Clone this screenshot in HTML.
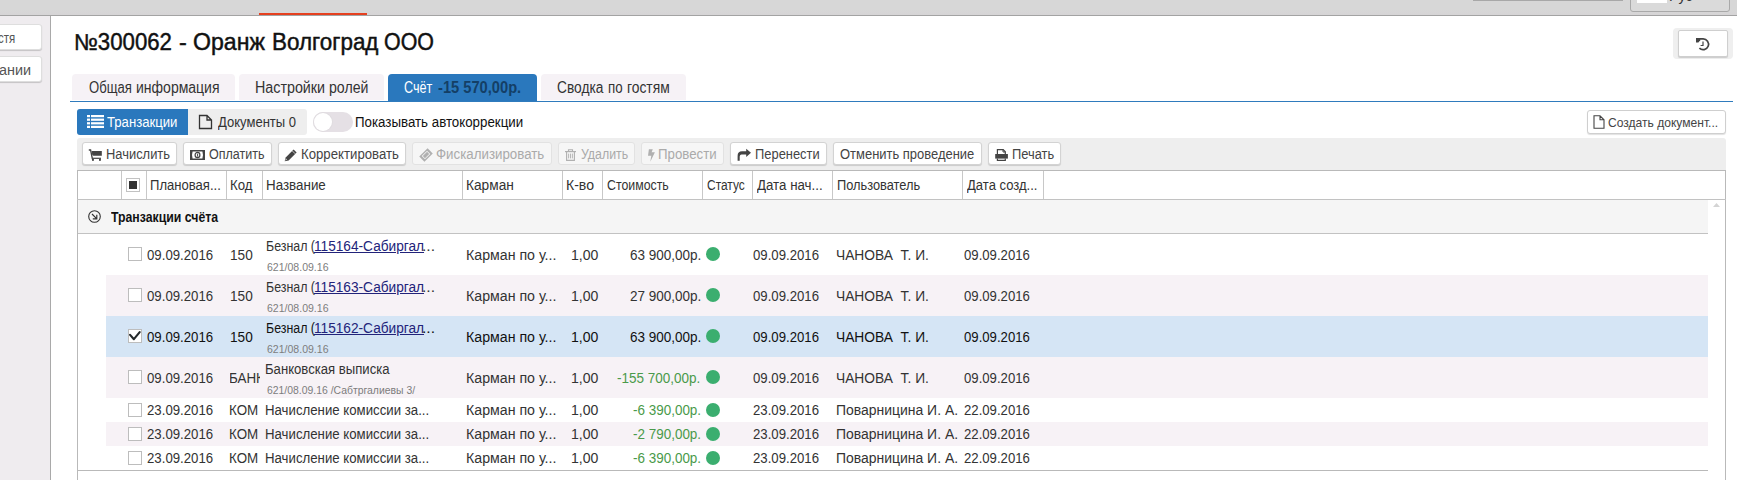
<!DOCTYPE html>
<html><head><meta charset="utf-8"><style>
html,body{margin:0;padding:0}
body{width:1737px;height:480px;overflow:hidden;position:relative;background:#fff;font-family:"Liberation Sans", sans-serif}
body div,body span,body svg{position:absolute}
.t{white-space:pre;transform-origin:0 0;display:block}
</style></head><body>
<div style="left:0px;top:0px;width:1737px;height:15px;background:linear-gradient(#d7d7d7 0,#d7d7d7 9px,#d6d4d6 15px)"></div>
<div style="left:0px;top:15px;width:1737px;height:1px;background:#a3a3a3"></div>
<div style="left:259px;top:13px;width:108px;height:2px;background:#e5401f"></div>
<div style="left:1473px;top:0px;width:150px;height:1px;background:#a8a8a8"></div>
<div style="left:1630px;top:-4px;width:100px;height:16px;background:#dadada;border:1px solid #a9a9a9;border-radius:3px;box-sizing:border-box"></div>
<div style="left:1637px;top:0px;width:30px;height:3px;background:#fff"></div>
<span class="t" style="left:1669.48px;top:-11px;font-size:14px;line-height:14px;color:#333;font-weight:normal;transform:scaleX(1.0182);">Рус</span>
<div style="left:0px;top:16px;width:50px;height:464px;background:#efecef"></div>
<div style="left:50px;top:16px;width:1px;height:464px;background:#a9a9a9"></div>
<div style="left:-10px;top:24px;width:52px;height:26px;background:#fff;border:1px solid #dedede;border-radius:3px;box-sizing:border-box;box-shadow:0 1px 1px rgba(0,0,0,.18)"></div>
<div style="left:-10px;top:56px;width:52px;height:26px;background:#fff;border:1px solid #dedede;border-radius:3px;box-sizing:border-box;box-shadow:0 1px 1px rgba(0,0,0,.18)"></div>
<span class="t" style="left:-2.50px;top:31px;font-size:14px;line-height:14px;color:#555;font-weight:normal;transform:scaleX(0.8190);">стя</span>
<span class="t" style="left:-1.50px;top:63px;font-size:14px;line-height:14px;color:#555;font-weight:normal;transform:scaleX(1.0290);">ании</span>
<span class="t" style="left:73.97px;top:31px;font-size:23px;line-height:23px;color:#111;font-weight:normal;transform:scaleX(0.9657);-webkit-text-stroke:0.45px #111;">№300062</span>
<span class="t" style="left:179.38px;top:31px;font-size:23px;line-height:23px;color:#111;font-weight:normal;transform:scaleX(1.0167);-webkit-text-stroke:0.45px #111;">-</span>
<span class="t" style="left:193.30px;top:31px;font-size:23px;line-height:23px;color:#111;font-weight:normal;transform:scaleX(1.0042);-webkit-text-stroke:0.45px #111;">Оранж</span>
<span class="t" style="left:271.55px;top:31px;font-size:23px;line-height:23px;color:#111;font-weight:normal;transform:scaleX(0.9757);-webkit-text-stroke:0.45px #111;">Волгоград</span>
<span class="t" style="left:384.47px;top:31px;font-size:23px;line-height:23px;color:#111;font-weight:normal;transform:scaleX(0.9298);-webkit-text-stroke:0.45px #111;">ООО</span>
<div style="left:1673px;top:28px;width:60px;height:31px;background:#efefef;border-radius:4px"></div>
<div style="left:1678px;top:30px;width:50px;height:27px;background:#fff;border:1px solid #cfcfcf;border-radius:2px;box-sizing:border-box;box-shadow:0 1px 1px rgba(0,0,0,.15)"></div>
<svg style="left:1695px;top:36px" width="16" height="16" viewBox="0 0 16 16"><path d="M2.5 2.9 H8 A5.4 5.4 0 1 1 4.4 12.2" fill="none" stroke="#444" stroke-width="1.7"/><path d="M1 1.9 H5.2 V4.2 L3.4 6.6 H1 Z" fill="#444"/><path d="M8 5.5 V9.5 H5.6" fill="none" stroke="#444" stroke-width="1.2"/></svg>
<div style="left:72px;top:74px;width:163px;height:26px;background:#f6f2f6;border-radius:4px 4px 0 0"></div>
<div style="left:239px;top:74px;width:145px;height:26px;background:#f6f2f6;border-radius:4px 4px 0 0"></div>
<div style="left:388px;top:74px;width:149px;height:28px;background:#2a78bd;border-radius:4px 4px 0 0"></div>
<div style="left:541px;top:74px;width:145px;height:26px;background:#f6f2f6;border-radius:4px 4px 0 0"></div>
<div style="left:70px;top:101px;width:1663px;height:1px;background:#2f7bbd"></div>
<span class="t" style="left:88.80px;top:80px;font-size:16px;line-height:16px;color:#333;font-weight:normal;transform:scaleX(0.8192);">Общая</span>
<span class="t" style="left:135.72px;top:80px;font-size:16px;line-height:16px;color:#333;font-weight:normal;transform:scaleX(0.8755);">информация</span>
<span class="t" style="left:254.71px;top:80px;font-size:16px;line-height:16px;color:#333;font-weight:normal;transform:scaleX(0.8935);">Настройки</span>
<span class="t" style="left:328.72px;top:80px;font-size:16px;line-height:16px;color:#333;font-weight:normal;transform:scaleX(0.8837);">ролей</span>
<span class="t" style="left:404.01px;top:80px;font-size:16px;line-height:16px;color:#fff;font-weight:normal;transform:scaleX(0.7886);">Счёт</span>
<span class="t" style="left:437.50px;top:80px;font-size:16px;line-height:16px;color:#143f66;font-weight:bold;transform:scaleX(0.9167);">-15 570,00р.</span>
<span class="t" style="left:556.54px;top:80px;font-size:16px;line-height:16px;color:#333;font-weight:normal;transform:scaleX(0.8585);">Сводка</span>
<span class="t" style="left:608.37px;top:80px;font-size:16px;line-height:16px;color:#333;font-weight:normal;transform:scaleX(0.8312);">по</span>
<span class="t" style="left:627.34px;top:80px;font-size:16px;line-height:16px;color:#333;font-weight:normal;transform:scaleX(0.8646);">гостям</span>
<div style="left:77px;top:109px;width:230px;height:26px;background:#eeeeee;border-radius:3px"></div>
<div style="left:77px;top:109px;width:111px;height:26px;background:#2a78bd;border-radius:3px 0 0 3px"></div>
<svg style="left:87px;top:115px" width="17" height="13" viewBox="0 0 17 13"><g fill="#fff"><rect x="0" y="0" width="3" height="2.2"/><rect x="4" y="0" width="13" height="2.2"/><rect x="0" y="3.6" width="3" height="2.2"/><rect x="4" y="3.6" width="13" height="2.2"/><rect x="0" y="7.2" width="3" height="2.2"/><rect x="4" y="7.2" width="13" height="2.2"/><rect x="0" y="10.8" width="3" height="2.2"/><rect x="4" y="10.8" width="13" height="2.2"/></g></svg>
<span class="t" style="left:107.40px;top:115px;font-size:14px;line-height:14px;color:#fff;font-weight:normal;transform:scaleX(0.9387);">Транзакции</span>
<svg style="left:198px;top:114px" width="15" height="16" viewBox="0 0 15 16"><path d="M1.5 1.5 H9 L13.5 6 V14.5 H1.5 Z M9 1.5 V6 H13.5" fill="none" stroke="#333" stroke-width="1.3"/></svg>
<span class="t" style="left:217.50px;top:115px;font-size:14px;line-height:14px;color:#333;font-weight:normal;transform:scaleX(0.9310);">Документы 0</span>
<div style="left:313px;top:112px;width:40px;height:20px;background:#e5e0e5;border-radius:10px"></div>
<div style="left:314px;top:113px;width:18px;height:18px;background:#fff;border-radius:50%;box-shadow:0 0 0 1px #e0dce0"></div>
<span class="t" style="left:354.75px;top:115px;font-size:14px;line-height:14px;color:#111;font-weight:normal;transform:scaleX(0.9503);">Показывать автокоррекции</span>
<div style="left:1587px;top:110px;width:139px;height:24px;background:#fff;border:1px solid #cfcfcf;border-radius:3px;box-sizing:border-box;box-shadow:0 1px 1px rgba(0,0,0,.12)"></div>
<svg style="left:1593px;top:115px" width="12" height="14" viewBox="0 0 12 14"><path d="M1 0.8 H7 L11 4.8 V13.2 H1 Z M7 0.8 V4.8 H11" fill="none" stroke="#444" stroke-width="1.1"/></svg>
<span class="t" style="left:1608.00px;top:116px;font-size:13px;line-height:13px;color:#444;font-weight:normal;transform:scaleX(0.9280);">Создать документ...</span>
<div style="left:77px;top:138px;width:1649px;height:33px;background:#eeeeee;border-radius:3px 3px 0 0"></div>
<div style="left:82px;top:142px;width:95px;height:23px;background:#fff;border:1px solid #d3d3d3;border-radius:3px;box-sizing:border-box;box-shadow:0 1px 1px rgba(0,0,0,.15)"></div>
<span class="t" style="left:105.78px;top:147px;font-size:14px;line-height:14px;color:#444;font-weight:normal;transform:scaleX(0.9221);">Начислить</span>
<div style="left:183px;top:142px;width:89px;height:23px;background:#fff;border:1px solid #d3d3d3;border-radius:3px;box-sizing:border-box;box-shadow:0 1px 1px rgba(0,0,0,.15)"></div>
<span class="t" style="left:209.30px;top:147px;font-size:14px;line-height:14px;color:#444;font-weight:normal;transform:scaleX(0.8952);">Оплатить</span>
<div style="left:278px;top:142px;width:128px;height:23px;background:#fff;border:1px solid #d3d3d3;border-radius:3px;box-sizing:border-box;box-shadow:0 1px 1px rgba(0,0,0,.15)"></div>
<span class="t" style="left:300.66px;top:147px;font-size:14px;line-height:14px;color:#444;font-weight:normal;transform:scaleX(0.9427);">Корректировать</span>
<div style="left:412px;top:142px;width:140px;height:23px;background:#f6f6f6;border:1px solid #e2e2e2;border-radius:3px;box-sizing:border-box"></div>
<span class="t" style="left:436.25px;top:147px;font-size:14px;line-height:14px;color:#aaaaaa;font-weight:normal;transform:scaleX(0.9504);">Фискализировать</span>
<div style="left:558px;top:142px;width:77px;height:23px;background:#f6f6f6;border:1px solid #e2e2e2;border-radius:3px;box-sizing:border-box"></div>
<span class="t" style="left:580.70px;top:147px;font-size:14px;line-height:14px;color:#aaaaaa;font-weight:normal;transform:scaleX(0.8811);">Удалить</span>
<div style="left:641px;top:142px;width:83px;height:23px;background:#f6f6f6;border:1px solid #e2e2e2;border-radius:3px;box-sizing:border-box"></div>
<span class="t" style="left:658.35px;top:147px;font-size:14px;line-height:14px;color:#aaaaaa;font-weight:normal;transform:scaleX(0.9467);">Провести</span>
<div style="left:730px;top:142px;width:97px;height:23px;background:#fff;border:1px solid #d3d3d3;border-radius:3px;box-sizing:border-box;box-shadow:0 1px 1px rgba(0,0,0,.15)"></div>
<span class="t" style="left:754.58px;top:147px;font-size:14px;line-height:14px;color:#444;font-weight:normal;transform:scaleX(0.9217);">Перенести</span>
<div style="left:833px;top:142px;width:149px;height:23px;background:#fff;border:1px solid #d3d3d3;border-radius:3px;box-sizing:border-box;box-shadow:0 1px 1px rgba(0,0,0,.15)"></div>
<span class="t" style="left:840.40px;top:147px;font-size:14px;line-height:14px;color:#444;font-weight:normal;transform:scaleX(0.9255);">Отменить проведение</span>
<div style="left:988px;top:142px;width:73px;height:23px;background:#fff;border:1px solid #d3d3d3;border-radius:3px;box-sizing:border-box;box-shadow:0 1px 1px rgba(0,0,0,.15)"></div>
<span class="t" style="left:1011.68px;top:147px;font-size:14px;line-height:14px;color:#444;font-weight:normal;transform:scaleX(0.9200);">Печать</span>
<svg style="left:88px;top:149px" width="15" height="13" viewBox="0 0 15 13"><path d="M0.8 1 H2.6 L4.4 10" fill="none" stroke="#444" stroke-width="1.3"/><path d="M3.6 2 H13.8 V6.8 H5.6 Q4.6 6.8 4.2 5.6 Z" fill="#444"/><path d="M4.2 9.3 H13" stroke="#444" stroke-width="1.2"/><rect x="4" y="10" width="1.9" height="1.8" fill="#444"/><rect x="11" y="10" width="1.9" height="1.8" fill="#444"/></svg>
<svg style="left:190px;top:150px" width="15" height="10" viewBox="0 0 15 10"><rect x="0" y="0" width="15" height="10" fill="#444"/><path d="M2.6 1.5 H12.4 Q13.6 5 12.4 8.5 H2.6 Q1.4 5 2.6 1.5 Z" fill="#fff"/><ellipse cx="7.5" cy="5" rx="2.4" ry="2.7" fill="none" stroke="#444" stroke-width="1.2"/><path d="M7.6 3.6 V6.6" stroke="#444" stroke-width="1"/></svg>
<svg style="left:284px;top:149px" width="14" height="13" viewBox="0 0 14 13"><path d="M0.7 12.3 L1.7 8.6 L9.6 0.6 L12.6 3.6 L4.6 11.5 Z" fill="#444"/><path d="M8.4 2.0 L11.2 4.8" stroke="#fff" stroke-width="0.7"/><path d="M1.2 11.8 L2 9.6 L3 10.6 Z" fill="#ddd"/></svg>
<svg style="left:418px;top:147px" width="16" height="16" viewBox="0 0 16 16"><g transform="rotate(45 8 8)"><rect x="4.35" y="2.1" width="7.3" height="11.8" fill="#b0b0b0"/><rect x="5.7" y="4.2" width="4.6" height="7.6" fill="#f4f4f4"/><rect x="6.5" y="5" width="3" height="6" fill="#b0b0b0"/></g></svg>
<svg style="left:565px;top:149px" width="11" height="12" viewBox="0 0 11 12"><path d="M3.5 2.5 V0.8 H7.5 V2.5" fill="none" stroke="#b0b0b0" stroke-width="1.1"/><path d="M0 2.6 H11" stroke="#b0b0b0" stroke-width="1.2"/><path d="M1.6 3 V11.4 H9.4 V3" fill="none" stroke="#b0b0b0" stroke-width="1.1"/><path d="M3.6 4.6 V9.4 M5.5 4.6 V9.4 M7.4 4.6 V9.4" stroke="#b0b0b0" stroke-width="0.9"/></svg>
<svg style="left:648px;top:149px" width="8" height="13" viewBox="0 0 8 13"><path d="M0.9 0.2 H4.8 L3.6 3.3 H6.9 L2.3 12.7 L3.3 6.7 H0 Z" fill="#b0b0b0"/></svg>
<svg style="left:737px;top:148px" width="15" height="13" viewBox="0 0 15 13"><path d="M9.2 0.8 L14 4.8 L9.2 8.9 V6.4 H4.6 C3.3 6.4 2.7 7.4 2.7 9 V12.7 H0.6 V8 C0.6 4.8 2.1 3.3 5 3.3 H9.2 Z" fill="#444"/></svg>
<svg style="left:995px;top:149px" width="13" height="12" viewBox="0 0 13 12"><path d="M2.4 5.2 V0.7 H8.2 L10.3 2.8 V5.2" fill="none" stroke="#444" stroke-width="1.2"/><path d="M8 0.7 V3 H10.3" fill="none" stroke="#444" stroke-width="1"/><rect x="0.2" y="5" width="12.7" height="4.6" fill="#444"/><path d="M2.4 9.5 V11.3 H10.3 V9.5" fill="none" stroke="#444" stroke-width="1.2"/></svg>
<div style="left:77px;top:170px;width:1649px;height:310px;background:#fff;border:1px solid #b9b9b9;border-bottom:none;box-sizing:border-box"></div>
<div style="left:77px;top:199px;width:1649px;height:1px;background:#c2c2c2"></div>
<div style="left:121px;top:171px;width:1px;height:28px;background:#c8c8c8"></div>
<div style="left:146px;top:171px;width:1px;height:28px;background:#c8c8c8"></div>
<div style="left:226px;top:171px;width:1px;height:28px;background:#c8c8c8"></div>
<div style="left:262px;top:171px;width:1px;height:28px;background:#c8c8c8"></div>
<div style="left:462px;top:171px;width:1px;height:28px;background:#c8c8c8"></div>
<div style="left:562px;top:171px;width:1px;height:28px;background:#c8c8c8"></div>
<div style="left:602px;top:171px;width:1px;height:28px;background:#c8c8c8"></div>
<div style="left:702px;top:171px;width:1px;height:28px;background:#c8c8c8"></div>
<div style="left:752px;top:171px;width:1px;height:28px;background:#c8c8c8"></div>
<div style="left:832px;top:171px;width:1px;height:28px;background:#c8c8c8"></div>
<div style="left:962px;top:171px;width:1px;height:28px;background:#c8c8c8"></div>
<div style="left:1043px;top:171px;width:1px;height:28px;background:#c8c8c8"></div>
<div style="left:126px;top:178px;width:14px;height:14px;background:#fff;border:1px solid #c2c2c2;box-sizing:border-box"></div>
<div style="left:129px;top:181px;width:8px;height:8px;background:#333"></div>
<span class="t" style="left:150.32px;top:178px;font-size:14px;line-height:14px;color:#333;font-weight:normal;transform:scaleX(0.9331);">Плановая...</span>
<span class="t" style="left:230.30px;top:178px;font-size:14px;line-height:14px;color:#333;font-weight:normal;transform:scaleX(0.9457);">Код</span>
<span class="t" style="left:266.24px;top:178px;font-size:14px;line-height:14px;color:#333;font-weight:normal;transform:scaleX(0.9557);">Название</span>
<span class="t" style="left:466.42px;top:178px;font-size:14px;line-height:14px;color:#333;font-weight:normal;transform:scaleX(0.9787);">Карман</span>
<span class="t" style="left:566.40px;top:178px;font-size:14px;line-height:14px;color:#333;font-weight:normal;transform:scaleX(1.0037);">К-во</span>
<span class="t" style="left:607.30px;top:178px;font-size:14px;line-height:14px;color:#333;font-weight:normal;transform:scaleX(0.8814);">Стоимость</span>
<span class="t" style="left:706.90px;top:178px;font-size:14px;line-height:14px;color:#333;font-weight:normal;transform:scaleX(0.8545);">Статус</span>
<span class="t" style="left:756.70px;top:178px;font-size:14px;line-height:14px;color:#333;font-weight:normal;transform:scaleX(0.9500);">Дата нач...</span>
<span class="t" style="left:836.58px;top:178px;font-size:14px;line-height:14px;color:#333;font-weight:normal;transform:scaleX(0.9156);">Пользователь</span>
<span class="t" style="left:966.80px;top:178px;font-size:14px;line-height:14px;color:#333;font-weight:normal;transform:scaleX(0.9320);">Дата созд...</span>
<div style="left:78px;top:200px;width:1630px;height:33px;background:#f5f5f5"></div>
<div style="left:78px;top:233px;width:1630px;height:1px;background:#c2c2c2"></div>
<svg style="left:88px;top:210px" width="13" height="13" viewBox="0 0 13 13"><circle cx="6.5" cy="6.5" r="5.8" fill="none" stroke="#333" stroke-width="1.1"/><path d="M4 4 L8.6 8.6 M8.8 4.8 V8.8 H4.8" fill="none" stroke="#333" stroke-width="1.2"/></svg>
<span class="t" style="left:111.00px;top:210px;font-size:14px;line-height:14px;color:#111;font-weight:bold;transform:scaleX(0.8770);">Транзакции счёта</span>
<svg style="left:1713px;top:203px" width="7" height="4" viewBox="0 0 7 4"><path d="M0 4 L3.5 0 L7 4 Z" fill="#d4d4d4"/></svg>
<div style="left:106px;top:234px;width:1602px;height:41px;background:#fff"></div>
<div style="left:128px;top:247px;width:14px;height:14px;background:#fff;border:1px solid #bdbdbd;box-sizing:border-box"></div>
<span class="t" style="left:147.20px;top:248px;font-size:14px;line-height:14px;color:#333;font-weight:normal;transform:scaleX(0.9443);">09.09.2016</span>
<span class="t" style="left:229.63px;top:248px;font-size:14px;line-height:14px;color:#333;font-weight:normal;transform:scaleX(0.9727);">150</span>
<span class="t" style="left:266.31px;top:239px;font-size:14px;line-height:14px;color:#333;font-weight:normal;transform:scaleX(0.8852);">Безнал (</span>
<span class="t" style="left:314.02px;top:239px;font-size:14px;line-height:14px;color:#22237a;font-weight:normal;transform:scaleX(0.9757);text-decoration:underline;">115164-Сабиргал</span>
<span class="t" style="left:422.18px;top:239px;font-size:14px;line-height:14px;color:#333;font-weight:normal;transform:scaleX(1.1200);">...</span>
<span class="t" style="left:266.50px;top:262px;font-size:11px;line-height:11px;color:#7d7d7d;font-weight:normal;transform:scaleX(0.9578);">621/08.09.16</span>
<span class="t" style="left:466.39px;top:248px;font-size:14px;line-height:14px;color:#333;font-weight:normal;transform:scaleX(1.0125);">Карман по у...</span>
<span class="t" style="left:571.40px;top:248px;font-size:14px;line-height:14px;color:#333;font-weight:normal;transform:scaleX(1.0038);">1,00</span>
<span class="t" style="left:629.60px;top:248px;font-size:14px;line-height:14px;color:#333;font-weight:normal;transform:scaleX(0.9644);">63 900,00р.</span>
<div style="left:706px;top:247px;width:14px;height:14px;background:#3bae6f;border-radius:50%"></div>
<span class="t" style="left:753.30px;top:248px;font-size:14px;line-height:14px;color:#333;font-weight:normal;transform:scaleX(0.9414);">09.09.2016</span>
<span class="t" style="left:836.32px;top:248px;font-size:14px;line-height:14px;color:#333;font-weight:normal;transform:scaleX(0.9839);">ЧАНОВА&nbsp; Т. И.</span>
<span class="t" style="left:963.50px;top:248px;font-size:14px;line-height:14px;color:#333;font-weight:normal;transform:scaleX(0.9400);">09.09.2016</span>
<div style="left:106px;top:275px;width:1602px;height:41px;background:#f7f2f6"></div>
<div style="left:128px;top:288px;width:14px;height:14px;background:#fff;border:1px solid #bdbdbd;box-sizing:border-box"></div>
<span class="t" style="left:147.20px;top:289px;font-size:14px;line-height:14px;color:#333;font-weight:normal;transform:scaleX(0.9443);">09.09.2016</span>
<span class="t" style="left:229.63px;top:289px;font-size:14px;line-height:14px;color:#333;font-weight:normal;transform:scaleX(0.9727);">150</span>
<span class="t" style="left:266.31px;top:280px;font-size:14px;line-height:14px;color:#333;font-weight:normal;transform:scaleX(0.8852);">Безнал (</span>
<span class="t" style="left:314.02px;top:280px;font-size:14px;line-height:14px;color:#22237a;font-weight:normal;transform:scaleX(0.9757);text-decoration:underline;">115163-Сабиргал</span>
<span class="t" style="left:422.18px;top:280px;font-size:14px;line-height:14px;color:#333;font-weight:normal;transform:scaleX(1.1200);">...</span>
<span class="t" style="left:266.50px;top:303px;font-size:11px;line-height:11px;color:#7d7d7d;font-weight:normal;transform:scaleX(0.9578);">621/08.09.16</span>
<span class="t" style="left:466.39px;top:289px;font-size:14px;line-height:14px;color:#333;font-weight:normal;transform:scaleX(1.0125);">Карман по у...</span>
<span class="t" style="left:571.40px;top:289px;font-size:14px;line-height:14px;color:#333;font-weight:normal;transform:scaleX(1.0038);">1,00</span>
<span class="t" style="left:629.60px;top:289px;font-size:14px;line-height:14px;color:#333;font-weight:normal;transform:scaleX(0.9644);">27 900,00р.</span>
<div style="left:706px;top:288px;width:14px;height:14px;background:#3bae6f;border-radius:50%"></div>
<span class="t" style="left:753.30px;top:289px;font-size:14px;line-height:14px;color:#333;font-weight:normal;transform:scaleX(0.9414);">09.09.2016</span>
<span class="t" style="left:836.32px;top:289px;font-size:14px;line-height:14px;color:#333;font-weight:normal;transform:scaleX(0.9839);">ЧАНОВА&nbsp; Т. И.</span>
<span class="t" style="left:963.50px;top:289px;font-size:14px;line-height:14px;color:#333;font-weight:normal;transform:scaleX(0.9400);">09.09.2016</span>
<div style="left:106px;top:316px;width:1602px;height:41px;background:#d5e5f5"></div>
<div style="left:128px;top:329px;width:14px;height:14px;background:#fff;border:1px solid #bdbdbd;box-sizing:border-box"></div>
<svg style="left:129px;top:330px" width="12" height="12" viewBox="0 0 12 12"><path d="M1.1 4.9 L4.9 9.2 L10.7 2.1" fill="none" stroke="#23292b" stroke-width="2.1" stroke-linecap="round" stroke-linejoin="round"/></svg>
<span class="t" style="left:147.20px;top:330px;font-size:14px;line-height:14px;color:#111;font-weight:normal;transform:scaleX(0.9443);">09.09.2016</span>
<span class="t" style="left:229.63px;top:330px;font-size:14px;line-height:14px;color:#111;font-weight:normal;transform:scaleX(0.9727);">150</span>
<span class="t" style="left:266.31px;top:321px;font-size:14px;line-height:14px;color:#111;font-weight:normal;transform:scaleX(0.8852);">Безнал (</span>
<span class="t" style="left:314.02px;top:321px;font-size:14px;line-height:14px;color:#22237a;font-weight:normal;transform:scaleX(0.9757);text-decoration:underline;">115162-Сабиргал</span>
<span class="t" style="left:422.18px;top:321px;font-size:14px;line-height:14px;color:#111;font-weight:normal;transform:scaleX(1.1200);">...</span>
<span class="t" style="left:266.50px;top:344px;font-size:11px;line-height:11px;color:#7d7d7d;font-weight:normal;transform:scaleX(0.9578);">621/08.09.16</span>
<span class="t" style="left:466.39px;top:330px;font-size:14px;line-height:14px;color:#111;font-weight:normal;transform:scaleX(1.0125);">Карман по у...</span>
<span class="t" style="left:571.40px;top:330px;font-size:14px;line-height:14px;color:#111;font-weight:normal;transform:scaleX(1.0038);">1,00</span>
<span class="t" style="left:629.60px;top:330px;font-size:14px;line-height:14px;color:#111;font-weight:normal;transform:scaleX(0.9644);">63 900,00р.</span>
<div style="left:706px;top:329px;width:14px;height:14px;background:#3bae6f;border-radius:50%"></div>
<span class="t" style="left:753.30px;top:330px;font-size:14px;line-height:14px;color:#111;font-weight:normal;transform:scaleX(0.9414);">09.09.2016</span>
<span class="t" style="left:836.32px;top:330px;font-size:14px;line-height:14px;color:#111;font-weight:normal;transform:scaleX(0.9839);">ЧАНОВА&nbsp; Т. И.</span>
<span class="t" style="left:963.50px;top:330px;font-size:14px;line-height:14px;color:#111;font-weight:normal;transform:scaleX(0.9400);">09.09.2016</span>
<div style="left:106px;top:357px;width:1602px;height:41px;background:#f7f2f6"></div>
<div style="left:128px;top:370px;width:14px;height:14px;background:#fff;border:1px solid #bdbdbd;box-sizing:border-box"></div>
<span class="t" style="left:147.20px;top:371px;font-size:14px;line-height:14px;color:#333;font-weight:normal;transform:scaleX(0.9443);">09.09.2016</span>
<div style="left:230px;top:357px;width:30px;height:41px;overflow:hidden">
<span class="t" style="left:-0.66px;top:14px;font-size:14px;line-height:14px;color:#333;font-weight:normal;transform:scaleX(0.9571);">БАНК</span>
</div>
<span class="t" style="left:265.31px;top:362px;font-size:14px;line-height:14px;color:#333;font-weight:normal;transform:scaleX(0.9375);">Банковская выписка</span>
<span class="t" style="left:266.50px;top:385px;font-size:11px;line-height:11px;color:#7d7d7d;font-weight:normal;transform:scaleX(0.9459);">621/08.09.16 /Сабтргалиевы 3/</span>
<span class="t" style="left:466.39px;top:371px;font-size:14px;line-height:14px;color:#333;font-weight:normal;transform:scaleX(1.0125);">Карман по у...</span>
<span class="t" style="left:571.40px;top:371px;font-size:14px;line-height:14px;color:#333;font-weight:normal;transform:scaleX(1.0038);">1,00</span>
<span class="t" style="left:617.10px;top:371px;font-size:14px;line-height:14px;color:#4a9a4a;font-weight:normal;transform:scaleX(0.9640);">-155 700,00р.</span>
<div style="left:706px;top:370px;width:14px;height:14px;background:#3bae6f;border-radius:50%"></div>
<span class="t" style="left:753.30px;top:371px;font-size:14px;line-height:14px;color:#333;font-weight:normal;transform:scaleX(0.9414);">09.09.2016</span>
<span class="t" style="left:836.32px;top:371px;font-size:14px;line-height:14px;color:#333;font-weight:normal;transform:scaleX(0.9839);">ЧАНОВА&nbsp; Т. И.</span>
<span class="t" style="left:963.50px;top:371px;font-size:14px;line-height:14px;color:#333;font-weight:normal;transform:scaleX(0.9400);">09.09.2016</span>
<div style="left:106px;top:398px;width:1602px;height:24px;background:#fff"></div>
<div style="left:128px;top:403px;width:14px;height:14px;background:#fff;border:1px solid #bdbdbd;box-sizing:border-box"></div>
<span class="t" style="left:147.20px;top:403px;font-size:14px;line-height:14px;color:#333;font-weight:normal;transform:scaleX(0.9443);">23.09.2016</span>
<span class="t" style="left:229.34px;top:403px;font-size:14px;line-height:14px;color:#333;font-weight:normal;transform:scaleX(0.9552);">КОМ</span>
<span class="t" style="left:265.26px;top:403px;font-size:14px;line-height:14px;color:#333;font-weight:normal;transform:scaleX(0.9448);">Начисление комиссии за...</span>
<span class="t" style="left:466.39px;top:403px;font-size:14px;line-height:14px;color:#333;font-weight:normal;transform:scaleX(1.0125);">Карман по у...</span>
<span class="t" style="left:571.40px;top:403px;font-size:14px;line-height:14px;color:#333;font-weight:normal;transform:scaleX(1.0038);">1,00</span>
<span class="t" style="left:632.70px;top:403px;font-size:14px;line-height:14px;color:#4a9a4a;font-weight:normal;transform:scaleX(0.9614);">-6 390,00р.</span>
<div style="left:706px;top:403px;width:14px;height:14px;background:#3bae6f;border-radius:50%"></div>
<span class="t" style="left:753.30px;top:403px;font-size:14px;line-height:14px;color:#333;font-weight:normal;transform:scaleX(0.9414);">23.09.2016</span>
<span class="t" style="left:836.00px;top:403px;font-size:14px;line-height:14px;color:#333;font-weight:normal;transform:scaleX(0.9959);">Поварницина И. А.</span>
<span class="t" style="left:963.50px;top:403px;font-size:14px;line-height:14px;color:#333;font-weight:normal;transform:scaleX(0.9400);">22.09.2016</span>
<div style="left:106px;top:422px;width:1602px;height:24px;background:#f7f2f6"></div>
<div style="left:128px;top:427px;width:14px;height:14px;background:#fff;border:1px solid #bdbdbd;box-sizing:border-box"></div>
<span class="t" style="left:147.20px;top:427px;font-size:14px;line-height:14px;color:#333;font-weight:normal;transform:scaleX(0.9443);">23.09.2016</span>
<span class="t" style="left:229.34px;top:427px;font-size:14px;line-height:14px;color:#333;font-weight:normal;transform:scaleX(0.9552);">КОМ</span>
<span class="t" style="left:265.26px;top:427px;font-size:14px;line-height:14px;color:#333;font-weight:normal;transform:scaleX(0.9448);">Начисление комиссии за...</span>
<span class="t" style="left:466.39px;top:427px;font-size:14px;line-height:14px;color:#333;font-weight:normal;transform:scaleX(1.0125);">Карман по у...</span>
<span class="t" style="left:571.40px;top:427px;font-size:14px;line-height:14px;color:#333;font-weight:normal;transform:scaleX(1.0038);">1,00</span>
<span class="t" style="left:632.70px;top:427px;font-size:14px;line-height:14px;color:#4a9a4a;font-weight:normal;transform:scaleX(0.9614);">-2 790,00р.</span>
<div style="left:706px;top:427px;width:14px;height:14px;background:#3bae6f;border-radius:50%"></div>
<span class="t" style="left:753.30px;top:427px;font-size:14px;line-height:14px;color:#333;font-weight:normal;transform:scaleX(0.9414);">23.09.2016</span>
<span class="t" style="left:836.00px;top:427px;font-size:14px;line-height:14px;color:#333;font-weight:normal;transform:scaleX(0.9959);">Поварницина И. А.</span>
<span class="t" style="left:963.50px;top:427px;font-size:14px;line-height:14px;color:#333;font-weight:normal;transform:scaleX(0.9400);">22.09.2016</span>
<div style="left:106px;top:446px;width:1602px;height:24px;background:#fff"></div>
<div style="left:128px;top:451px;width:14px;height:14px;background:#fff;border:1px solid #bdbdbd;box-sizing:border-box"></div>
<span class="t" style="left:147.20px;top:451px;font-size:14px;line-height:14px;color:#333;font-weight:normal;transform:scaleX(0.9443);">23.09.2016</span>
<span class="t" style="left:229.34px;top:451px;font-size:14px;line-height:14px;color:#333;font-weight:normal;transform:scaleX(0.9552);">КОМ</span>
<span class="t" style="left:265.26px;top:451px;font-size:14px;line-height:14px;color:#333;font-weight:normal;transform:scaleX(0.9448);">Начисление комиссии за...</span>
<span class="t" style="left:466.39px;top:451px;font-size:14px;line-height:14px;color:#333;font-weight:normal;transform:scaleX(1.0125);">Карман по у...</span>
<span class="t" style="left:571.40px;top:451px;font-size:14px;line-height:14px;color:#333;font-weight:normal;transform:scaleX(1.0038);">1,00</span>
<span class="t" style="left:632.70px;top:451px;font-size:14px;line-height:14px;color:#4a9a4a;font-weight:normal;transform:scaleX(0.9614);">-6 390,00р.</span>
<div style="left:706px;top:451px;width:14px;height:14px;background:#3bae6f;border-radius:50%"></div>
<span class="t" style="left:753.30px;top:451px;font-size:14px;line-height:14px;color:#333;font-weight:normal;transform:scaleX(0.9414);">23.09.2016</span>
<span class="t" style="left:836.00px;top:451px;font-size:14px;line-height:14px;color:#333;font-weight:normal;transform:scaleX(0.9959);">Поварницина И. А.</span>
<span class="t" style="left:963.50px;top:451px;font-size:14px;line-height:14px;color:#333;font-weight:normal;transform:scaleX(0.9400);">22.09.2016</span>
<div style="left:78px;top:470px;width:1630px;height:1px;background:#b9b9b9"></div>
</body></html>
